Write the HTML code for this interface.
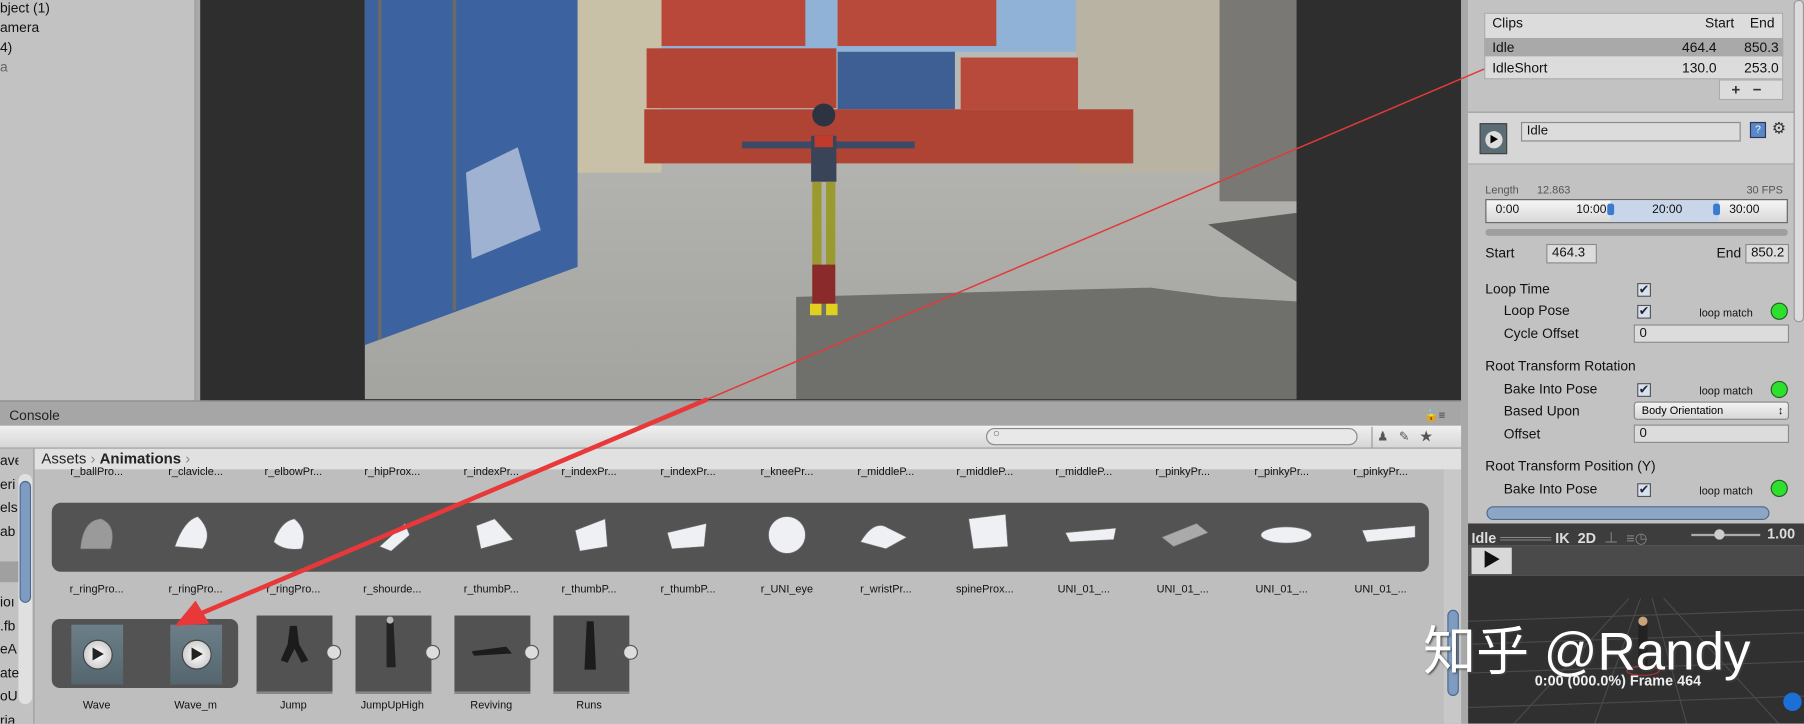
<!DOCTYPE html>
<html><head><meta charset="utf-8"><style>
*{margin:0;padding:0;box-sizing:border-box}
html,body{width:1804px;height:724px;overflow:hidden}
body{background:#c2c2c2;font-family:"Liberation Sans","Noto Sans CJK SC",sans-serif;position:relative}
#w{position:absolute;left:0;top:0;width:1568px;height:629px;transform:scale(1.15051);transform-origin:0 0;background:#c2c2c2;overflow:hidden}
.a{position:absolute}
.t{position:absolute;font-size:12px;color:#111;white-space:nowrap}
.n{position:absolute;font-size:9.5px;color:#111;white-space:nowrap;width:86px;text-align:center}
.fld{position:absolute;background:#dcdcdc;border:1px solid #8a8a8a;font-size:11.5px;padding-left:4px;line-height:14px;color:#111}
.cb{position:absolute;width:12px;height:12px;background:#d8e2ee;border:1px solid #555;font-size:11px;line-height:10px;text-align:center;color:#223}
.gr{position:absolute;width:15px;height:15px;border-radius:50%;background:#2ee02e;border:1px solid #2a5a2a}
.lm{position:absolute;font-size:9.5px;color:#111}
.thumb{position:absolute;width:66px;height:68px;background:#525252;border-bottom:2px solid #888}
</style></head><body><div id="w">

<div class="a" style="left:0;top:0;width:170px;height:348px;background:#c2c2c2;border-right:1px solid #999"></div>
<div class="t" style="left:0;top:0">bject (1)</div>
<div class="t" style="left:0;top:17px">amera</div>
<div class="t" style="left:0;top:34px">4)</div>
<div class="t" style="left:0;top:51px;color:#666">a</div>
<div class="a" style="left:170px;top:0;width:4px;height:348px;background:#a8a8a8"></div>

<div class="a" style="left:174px;top:0;width:1096px;height:348px;background:#2e2e2e"></div>
<svg class="a" style="left:317px;top:0" width="810" height="347" viewBox="317 0 810 347">
<defs><linearGradient id="g1" x1="0" y1="0" x2="0" y2="1"><stop offset="0" stop-color="#bdbdb8"/><stop offset="1" stop-color="#a3a3a0"/></linearGradient></defs>
<rect x="317" y="0" width="810" height="347" fill="url(#g1)"/>
<rect x="560" y="0" width="500" height="45" fill="#8fb2d6"/>
<rect x="500" y="0" width="75" height="150" fill="#c9c0a8"/>
<rect x="935" y="0" width="125" height="150" fill="#b9b3a4"/>
<rect x="1060" y="0" width="67" height="175" fill="#7a7874"/>
<rect x="575" y="0" width="125" height="40" fill="#b9483a"/>
<rect x="728" y="0" width="138" height="40" fill="#b84a3c"/>
<rect x="562" y="42" width="165" height="52" fill="#b34537"/>
<rect x="728" y="45" width="102" height="50" fill="#3d5f94"/>
<rect x="835" y="50" width="102" height="45" fill="#b84a3c"/>
<rect x="560" y="95" width="425" height="47" fill="#b04434"/>
<polygon points="317,0 502,0 502,232 317,300" fill="#3d62a0"/>
<polygon points="405,150 450,128 470,200 410,225" fill="#c9d4e6" opacity=".7"/>
<line x1="330" y1="0" x2="330" y2="295" stroke="#6d6a66" stroke-width="3"/>
<line x1="395" y1="0" x2="395" y2="270" stroke="#6d6a66" stroke-width="3"/>
<polygon points="692,347 692,258 1000,250 1060,258 1127,262 1127,347" fill="#6f6f6c"/>
<polygon points="1050,195 1127,185 1127,245" fill="#5c5c5a"/>
<circle cx="716" cy="100" r="10" fill="#2d3340"/>
<rect x="645" y="123" width="150" height="6" fill="#3c4a66"/>
<rect x="705" y="118" width="22" height="40" fill="#3a4458"/>
<rect x="708" y="118" width="16" height="10" fill="#c23a2a"/>
<rect x="706" y="158" width="8" height="100" fill="#9a9a2e"/>
<rect x="718" y="158" width="8" height="100" fill="#9a9a2e"/>
<rect x="706" y="230" width="20" height="34" fill="#8a2a2a"/>
<rect x="704" y="264" width="10" height="10" fill="#e0d020"/><rect x="718" y="264" width="10" height="10" fill="#e0d020"/>
</svg>

<div class="a" style="left:0;top:348px;width:1270px;height:22px;background:#a6a6a6;border-top:1px solid #8a8a8a"></div>
<div class="t" style="left:8px;top:354px;font-size:12px;color:#222">Console</div>
<div class="a" style="left:1238px;top:356px;font-size:10px;color:#333">🔒≡</div>
<div class="a" style="left:0;top:370px;width:1270px;height:20px;background:linear-gradient(#f0f0f0,#d6d6d6);border-bottom:1px solid #999"></div>
<div class="a" style="left:857px;top:372px;width:323px;height:15px;border:1px solid #888;border-radius:8px;background:#e8e8e8"></div>
<div class="a" style="left:863px;top:372px;font-size:10px;color:#666">○</div>
<div class="a" style="left:1192px;top:371px;width:72px;height:18px;border-left:1px solid #999;font-size:11px;color:#555;letter-spacing:9px;padding-left:4px">♟✎★</div>
<div class="a" style="left:0;top:390px;width:1270px;height:18px;background:#e1e1e1"></div>
<div class="t" style="left:36px;top:391px;font-size:13px;color:#222">Assets <span style="color:#888">›</span> <b>Animations</b> <span style="color:#888">›</span></div>
<div class="a" style="left:0;top:390px;width:30px;height:239px;background:#c2c2c2;border-right:1px solid #999;overflow:hidden">
<div class="a" style="left:16px;top:22px;width:12px;height:200px;border-radius:6px;background:#e0e0e0"></div>
<div class="a" style="left:17px;top:28px;width:10px;height:106px;border-radius:5px;background:#7e9bc0;border:1px solid #4b6a91"></div>
<div class="a" style="left:0;top:98px;width:16px;height:18px;background:#a0a0a0"></div>
<div class="a" style="left:0;top:0;font-size:12px;line-height:20.5px;color:#111;width:16px;overflow:hidden">ave<br>eri<br>els<br>ab<br><br><br>ioı<br>.fb<br>eA<br>ate<br>oU<br>ria</div>
</div>
<div class="a" style="left:31px;top:408px;width:1224px;height:221px;background:#bebebe"></div>
<div class="a" style="left:1255px;top:408px;width:15px;height:221px;background:#c8c8c8"></div>
<div class="a" style="left:1258px;top:530px;width:10px;height:75px;border-radius:5px;background:#7e9bc0;border:1px solid #4b6a91"></div>

<div class="n" style="left:41px;top:405px">r_ballPro...</div><div class="n" style="left:127px;top:405px">r_clavicle...</div><div class="n" style="left:212px;top:405px">r_elbowPr...</div><div class="n" style="left:298px;top:405px">r_hipProx...</div><div class="n" style="left:384px;top:405px">r_indexPr...</div><div class="n" style="left:469px;top:405px">r_indexPr...</div><div class="n" style="left:555px;top:405px">r_indexPr...</div><div class="n" style="left:641px;top:405px">r_kneePr...</div><div class="n" style="left:727px;top:405px">r_middleP...</div><div class="n" style="left:813px;top:405px">r_middleP...</div><div class="n" style="left:899px;top:405px">r_middleP...</div><div class="n" style="left:985px;top:405px">r_pinkyPr...</div><div class="n" style="left:1071px;top:405px">r_pinkyPr...</div><div class="n" style="left:1157px;top:405px">r_pinkyPr...</div>

<div class="a" style="left:45px;top:437px;width:1197px;height:60px;background:#535353;border-radius:8px"></div>
<svg class="a" style="left:0;top:437px" width="1250" height="60">
<g fill="#eef0f4" stroke="#777" stroke-width=".5">
<path d="M70 40 Q72 15 88 14 Q102 20 96 40 Z" fill="#9a9a9a"/>
<path d="M152 38 Q160 15 172 12 Q186 26 176 40 Z"/>
<path d="M238 34 Q244 16 256 14 Q268 24 262 40 Q246 42 238 34Z"/>
<path d="M330 38 L352 18 L356 28 L340 42Z"/>
<path d="M414 20 L430 14 L446 32 L418 40Z"/>
<path d="M500 24 L526 14 L528 38 L504 42Z"/>
<path d="M580 26 L614 18 L612 38 L584 40Z"/>
<circle cx="684" cy="28" r="16"/>
<path d="M748 34 Q760 14 772 22 L788 30 L770 40 Z"/>
<path d="M842 14 L874 10 L876 38 L846 40Z"/>
<path d="M926 26 L970 22 L968 32 L930 34Z"/>
<path d="M1010 30 L1040 18 L1050 26 L1020 38Z" fill="#aaa"/>
<ellipse cx="1118" cy="28" rx="22" ry="7"/>
<path d="M1184 24 L1230 20 L1230 30 L1188 34Z"/>
</g></svg>
<div class="n" style="left:41px;top:507px">r_ringPro...</div><div class="n" style="left:127px;top:507px">r_ringPro...</div><div class="n" style="left:212px;top:507px">r_ringPro...</div><div class="n" style="left:298px;top:507px">r_shourde...</div><div class="n" style="left:384px;top:507px">r_thumbP...</div><div class="n" style="left:469px;top:507px">r_thumbP...</div><div class="n" style="left:555px;top:507px">r_thumbP...</div><div class="n" style="left:641px;top:507px">r_UNI_eye</div><div class="n" style="left:727px;top:507px">r_wristPr...</div><div class="n" style="left:813px;top:507px">spineProx...</div><div class="n" style="left:899px;top:507px">UNI_01_...</div><div class="n" style="left:985px;top:507px">UNI_01_...</div><div class="n" style="left:1071px;top:507px">UNI_01_...</div><div class="n" style="left:1157px;top:507px">UNI_01_...</div>

<div class="a" style="left:45px;top:538px;width:162px;height:60px;background:#535353;border-radius:7px"></div>
<div class="a" style="left:62px;top:543px;width:45px;height:52px;background:linear-gradient(#6c7f88,#54656e)"></div>
<div class="a" style="left:148px;top:543px;width:45px;height:52px;background:linear-gradient(#6c7f88,#54656e)"></div>
<div class="a" style="left:72px;top:556px;width:26px;height:26px;border-radius:50%;background:radial-gradient(#fff,#bbb);border:1px solid #444;font-size:12px;line-height:24px;text-align:center;color:#222">▶</div>
<div class="a" style="left:158px;top:556px;width:26px;height:26px;border-radius:50%;background:radial-gradient(#fff,#bbb);border:1px solid #444;font-size:12px;line-height:24px;text-align:center;color:#222">▶</div>
<div class="thumb" style="left:223px;top:535px"></div><div class="thumb" style="left:309px;top:535px"></div><div class="thumb" style="left:395px;top:535px"></div><div class="thumb" style="left:481px;top:535px"></div>
<svg class="a" style="left:0;top:530px" width="560" height="80"><g fill="#1c1c1c">
<path d="M252 14 L258 14 L260 30 L268 44 L262 46 L256 34 L250 46 L244 44 L250 30Z"/>
<path d="M336 10 L342 10 L344 50 L338 50 L336 50Z" fill="#222"/><circle cx="339" cy="9" r="3" fill="#bbb"/>
<path d="M410 36 L440 32 L445 38 L412 40Z"/>
<path d="M510 10 L516 10 L518 52 L508 52Z"/></g>
<g fill="#ddd" stroke="#555"><circle cx="290" cy="37" r="6"/><circle cx="376" cy="37" r="6"/><circle cx="462" cy="37" r="6"/><circle cx="548" cy="37" r="6"/></g></svg>
<div class="n" style="left:41px;top:608px">Wave</div><div class="n" style="left:127px;top:608px">Wave_m</div><div class="n" style="left:212px;top:608px">Jump</div><div class="n" style="left:298px;top:608px">JumpUpHigh</div><div class="n" style="left:384px;top:608px">Reviving</div><div class="n" style="left:469px;top:608px">Runs</div>

<div class="a" style="left:1270px;top:0;width:6px;height:629px;background:#a8a8a8"></div>
<div class="a" style="left:1276px;top:0;width:292px;height:455px;background:#c2c2c2"></div>
<div class="a" style="left:1290px;top:11px;width:260px;height:58px;background:#dcdcdc;border:1px solid #aaa"></div>
<div class="a" style="left:1290px;top:33px;width:260px;height:16px;background:#a9a9a9"></div>
<div class="t" style="left:1297px;top:13px">Clips</div><div class="t" style="left:1482px;top:13px">Start</div><div class="t" style="left:1521px;top:13px">End</div>
<div class="t" style="left:1297px;top:34px">Idle</div><div class="t" style="left:1462px;top:34px">464.4</div><div class="t" style="left:1516px;top:34px">850.3</div>
<div class="t" style="left:1297px;top:52px">IdleShort</div><div class="t" style="left:1462px;top:52px">130.0</div><div class="t" style="left:1516px;top:52px">253.0</div>
<div class="a" style="left:1494px;top:69px;width:56px;height:18px;background:#dcdcdc;border:1px solid #aaa;font-size:13px;font-weight:bold;color:#333;padding-left:10px">+&nbsp;&nbsp;&nbsp;−</div>
<div class="a" style="left:1276px;top:97px;width:283px;height:46px;background:#d6d6d6;border-top:1px solid #999;border-bottom:1px solid #aaa"></div>
<div class="a" style="left:1286px;top:107px;width:24px;height:27px;background:#5b6c74;border:1px solid #444"><div style="margin:6px 0 0 4px;width:15px;height:15px;border-radius:50%;background:#ddd;font-size:8px;text-align:center;line-height:15px">▶</div></div>
<div class="fld" style="left:1322px;top:106px;width:191px;height:17px">Idle</div>
<div class="a" style="left:1521px;top:106px;width:14px;height:14px;background:#5888c8;border:1px solid #335;font-size:9px;color:#fff;text-align:center">?</div>
<div class="a" style="left:1540px;top:103px;font-size:14px;color:#333">⚙</div>
<div class="a" style="left:1291px;top:160px;font-size:9.5px;color:#555">Length&nbsp;&nbsp;&nbsp;&nbsp;&nbsp;&nbsp;12.863</div>
<div class="a" style="left:1518px;top:160px;font-size:9.5px;color:#555">30 FPS</div>
<div class="a" style="left:1291px;top:173px;width:263px;height:21px;background:linear-gradient(#f6f6f6,#d8d8d8);border:1px solid #666"></div>
<div class="a" style="left:1400px;top:174px;width:94px;height:19px;background:#c9d6ea"></div>
<div class="a" style="left:1300px;top:176px;font-size:10.5px;color:#111">0:00</div>
<div class="a" style="left:1370px;top:176px;font-size:10.5px;color:#111">10:00</div>
<div class="a" style="left:1436px;top:176px;font-size:10.5px;color:#111">20:00</div>
<div class="a" style="left:1503px;top:176px;font-size:10.5px;color:#111">30:00</div>
<div class="a" style="left:1397px;top:177px;width:6px;height:10px;background:#3a7ad0;border-radius:2px"></div>
<div class="a" style="left:1489px;top:177px;width:6px;height:10px;background:#3a7ad0;border-radius:2px"></div>
<div class="a" style="left:1291px;top:199px;width:263px;height:6px;border-radius:3px;background:#9f9f9f"></div>
<div class="t" style="left:1291px;top:213px">Start</div><div class="fld" style="left:1344px;top:212px;width:44px;height:17px">464.3</div>
<div class="t" style="left:1492px;top:213px">End</div><div class="fld" style="left:1517px;top:212px;width:38px;height:17px;overflow:hidden">850.2</div>
<div class="t" style="left:1291px;top:244px">Loop Time</div><div class="cb" style="left:1423px;top:246px">✔</div>
<div class="t" style="left:1307px;top:263px">Loop Pose</div><div class="cb" style="left:1423px;top:265px">✔</div><div class="lm" style="left:1477px;top:267px">loop match</div><div class="gr" style="left:1539px;top:263px"></div>
<div class="t" style="left:1307px;top:283px">Cycle Offset</div><div class="fld" style="left:1420px;top:282px;width:135px;height:16px">0</div>
<div class="t" style="left:1291px;top:311px">Root Transform Rotation</div>
<div class="t" style="left:1307px;top:331px">Bake Into Pose</div><div class="cb" style="left:1423px;top:333px">✔</div><div class="lm" style="left:1477px;top:335px">loop match</div><div class="gr" style="left:1539px;top:331px"></div>
<div class="t" style="left:1307px;top:350px">Based Upon</div><div class="a" style="left:1420px;top:349px;width:135px;height:16px;border:1px solid #888;border-radius:3px;background:linear-gradient(#f2f2f2,#d8d8d8);font-size:9.5px;padding:2px 0 0 6px">Body Orientation<span style="float:right;margin-right:4px">↕</span></div>
<div class="t" style="left:1307px;top:370px">Offset</div><div class="fld" style="left:1420px;top:369px;width:135px;height:16px">0</div>
<div class="t" style="left:1291px;top:398px">Root Transform Position (Y)</div>
<div class="t" style="left:1307px;top:418px">Bake Into Pose</div><div class="cb" style="left:1423px;top:420px">✔</div><div class="lm" style="left:1477px;top:422px">loop match</div><div class="gr" style="left:1539px;top:417px"></div>
<div class="a" style="left:1559px;top:0;width:9px;height:280px;border-radius:4px;background:#dcdcdc;border:1px solid #999"></div>
<div class="a" style="left:1276px;top:437px;width:292px;height:18px;background:#c2c2c2"></div>
<div class="a" style="left:1292px;top:440px;width:246px;height:12px;border-radius:6px;background:#8ea6c6;border:1px solid #4b6a91"></div>
<div class="a" style="left:1276px;top:455px;width:292px;height:19px;background:#3d3d3d"></div>
<div class="a" style="left:1279px;top:457px;font-size:12.5px;font-weight:bold;color:#ddd;white-space:nowrap">Idle <span style="color:#888">═════</span> IK&nbsp; 2D&nbsp; <span style="color:#888;font-weight:normal">⊥&nbsp; ≡◷</span></div>
<div class="a" style="left:1470px;top:464px;width:60px;height:2px;background:#aaa"></div>
<div class="a" style="left:1490px;top:460px;width:9px;height:9px;border-radius:50%;background:#ccc"></div>
<div class="a" style="left:1536px;top:457px;font-size:12.5px;font-weight:bold;color:#ddd">1.00</div>
<div class="a" style="left:1276px;top:474px;width:292px;height:26px;background:#4a4a4a"></div>
<div class="a" style="left:1279px;top:476px;width:35px;height:23px;background:#d8d8d8;font-size:16px;line-height:23px;text-align:center;color:#111">▶</div>
<svg class="a" style="left:1276px;top:500px" width="292" height="129">
<rect width="292" height="129" fill="#303030"/>
<g stroke="#4a4a4a" stroke-width="1">
<line x1="0" y1="40" x2="292" y2="30"/><line x1="0" y1="60" x2="292" y2="50"/><line x1="0" y1="85" x2="292" y2="75"/><line x1="0" y1="115" x2="292" y2="105"/>
<line x1="140" y1="20" x2="40" y2="129"/><line x1="150" y1="20" x2="110" y2="129"/><line x1="160" y1="20" x2="190" y2="129"/><line x1="170" y1="20" x2="270" y2="129"/>
</g>
<rect x="148" y="42" width="8" height="38" fill="#222"/><circle cx="152" cy="40" r="4" fill="#c9a27a"/>
<ellipse cx="152" cy="83" rx="14" ry="4" fill="none" stroke="#a33" stroke-width="1"/>
<circle cx="282" cy="110" r="8" fill="#1b6fd6"/>
</svg>
<div class="a" style="left:1237px;top:530px;font-size:46px;color:#fff;white-space:nowrap;text-shadow:1px 1px 2px #444">知乎 @Randy</div>
<div class="a" style="left:1334px;top:585px;font-size:12.5px;font-weight:bold;color:#eee;white-space:nowrap">0:00 (000.0%) Frame 464</div>

<svg class="a" style="left:0;top:0" width="1568" height="629">
<line x1="1290" y1="60" x2="615" y2="347" stroke="#e23a3a" stroke-width="1.3"/>
<line x1="615" y1="347" x2="175" y2="533" stroke="#e8383a" stroke-width="4"/>
<polygon points="152,544 170,522 182,542" fill="#e8383a"/>
</svg>
</div></body></html>
